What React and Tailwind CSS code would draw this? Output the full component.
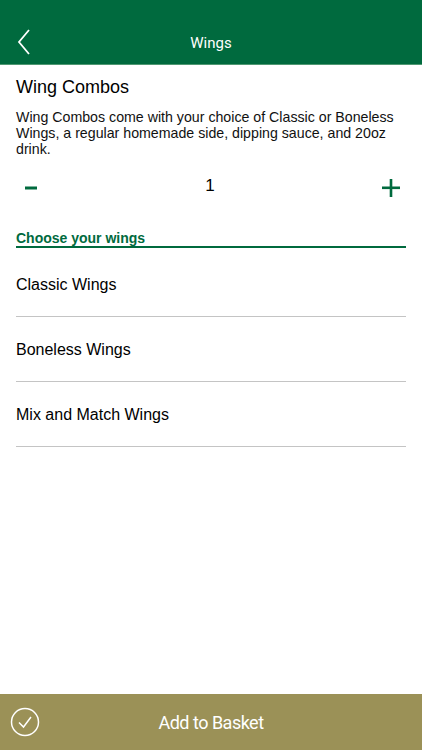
export default function App() {
  const options = ['Classic Wings', 'Boneless Wings', 'Mix and Match Wings'];

  return (
    <div className="flex flex-col h-[750px] w-[422px] bg-white" style={{ fontFamily: '"Liberation Sans", Arial, sans-serif' }}>
      {/* Header */}
      <div className="relative flex items-center justify-center h-[65px] pt-[22px] bg-[#006a3e] border-b border-[#4f9872] shrink-0">
        <button className="absolute left-[16px] top-[28px]">
          <svg width="16" height="28" viewBox="0 0 16 28" fill="none" stroke="white" strokeWidth="1.8">
            <path d="M13 2 L3 14 L13 26" />
          </svg>
        </button>
        <span className="text-white text-[15px]" style={{ fontFamily: 'Roboto, sans-serif' }}>
          Wings
        </span>
      </div>

      {/* Content */}
      <div className="flex-1 px-[16px]">
        <h1 className="text-[18px] text-black mt-[10px] leading-[24px]">Wing Combos</h1>
        <p className="text-[14.2px] text-[#111] leading-[16px] mt-[10px]">
          Wing Combos come with your choice of Classic or Boneless Wings, a regular homemade side, dipping sauce, and 20oz drink.
        </p>

        {/* Stepper */}
        <div className="flex items-center justify-between mt-[14px] h-[30px] px-[8px]">
          <svg width="14" height="4" viewBox="0 0 14 4" className="mt-[4px]">
            <rect x="1" y="0.5" width="12" height="3" fill="#006a3e" />
          </svg>
          <span className="text-[17px] text-black">1</span>
          <svg width="18" height="18" viewBox="0 0 18 18" className="mt-[4px] mr-[-2px]">
            <rect x="0" y="7.5" width="18" height="2.6" fill="#006a3e" />
            <rect x="7.7" y="0" width="2.6" height="18" fill="#006a3e" />
          </svg>
        </div>

        {/* Section */}
        <div className="mt-[29px] border-b-2 border-[#006a3e] leading-[16px]">
          <span className="text-[14px] font-bold text-[#006a3e]">Choose your wings</span>
        </div>

        <div className="flex flex-col pt-[4px]">
          {options.map((o) => (
            <div key={o} className="h-[65px] flex items-end pb-[19px] border-b-[1.5px] border-[#c4c4c4]">
              <span className="text-[16px] text-black">{o}</span>
            </div>
          ))}
        </div>
      </div>

      {/* Bottom bar */}
      <div className="relative flex items-center justify-center h-[56px] bg-[#9b9157] shrink-0">
        <svg className="absolute left-[10px] top-[13px]" width="30" height="30" viewBox="0 0 30 30" fill="none" stroke="white" strokeWidth="1.5">
          <circle cx="15" cy="15" r="13.5" />
          <path d="M9 15.5 L13.5 20 L21 10" />
        </svg>
        <span className="text-white text-[18px] tracking-[-0.5px]" style={{ fontFamily: 'Roboto, sans-serif' }}>
          Add to Basket
        </span>
      </div>
    </div>
  );
}
